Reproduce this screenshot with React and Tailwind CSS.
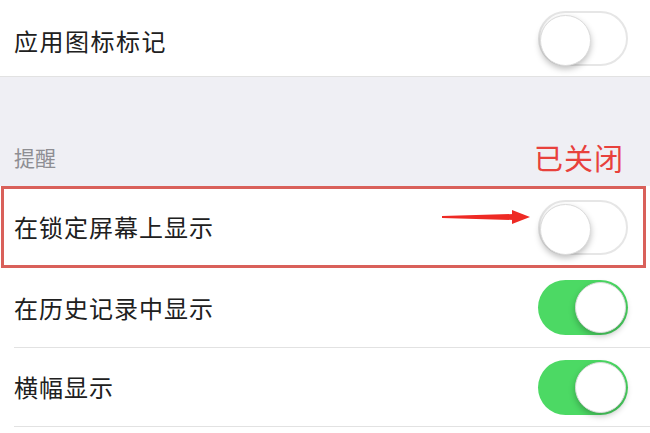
import React from 'react';

const font = { fontFamily: '"Noto Sans CJK SC", "Noto Sans", sans-serif' };

function Toggle({ on }) {
    return (
        <div
            className={`relative w-[90px] h-[55px] rounded-full shrink-0 ${
                on ? 'bg-[#4cd964]' : 'bg-white border-[2px] border-[#e6e6e6]'
            }`}
        >
            <div
                className={`absolute top-[2px] w-[51px] h-[51px] rounded-full bg-white shadow-[0_3px_6px_rgba(0,0,0,0.25)] border border-[#dcdcdc] ${
                    on ? 'right-[2px]' : 'left-0 top-0'
                }`}
            />
        </div>
    );
}

function Arrow() {
    return (
        <svg width="90" height="16" viewBox="0 0 90 16" className="-mt-[20px] mr-[6px]">
            <polygon points="0,7 72,5 72,11 0,9" fill="#ee2a24" />
            <polygon points="70,1 88,8 70,15" fill="#ee2a24" />
        </svg>
    );
}

export default function App() {
    return (
        <div className="w-[650px] h-[433px] bg-white overflow-hidden text-[#202020]" style={font}>
            {/* 应用图标标记 */}
            <div className="h-[77px] flex items-center justify-between pl-[14px] pr-[22px] border-b border-[#e2e2e2] bg-white">
                <span className="text-[24px] tracking-[1.5px] mt-[6px]">应用图标标记</span>
                <Toggle on={false} />
            </div>

            {/* 分组标题 */}
            <div className="h-[109px] bg-[#efeff4] flex flex-col justify-end">
                <div className="h-[48px] flex items-center justify-between pl-[14px] pr-[26px] mb-[4px]">
                    <span className="text-[21px] text-[#8e8e93]">提醒</span>
                    <span className="text-[29px] text-[#e8413c] tracking-[1px]">已关闭</span>
                </div>
            </div>

            {/* 在锁定屏幕上显示 */}
            <div className="h-[82px] ml-[1px] mr-[4px] border-[3px] border-[#d9605a] bg-white flex items-center pl-[10px] pr-[15px]">
                <span className="text-[24px] tracking-[1px]">在锁定屏幕上显示</span>
                <div className="ml-auto flex items-center">
                    <Arrow />
                    <Toggle on={false} />
                </div>
            </div>

            {/* 在历史记录中显示 */}
            <div className="pl-[14px]">
                <div className="h-[80px] flex items-center justify-between pr-[22px] border-b border-[#e2e2e2]">
                    <span className="text-[24px] tracking-[1px]">在历史记录中显示</span>
                    <Toggle on />
                </div>
                <div className="h-[79px] flex items-center justify-between pr-[22px] border-b border-[#e2e2e2]">
                    <span className="text-[24px] tracking-[1px]">横幅显示</span>
                    <Toggle on />
                </div>
            </div>
        </div>
    );
}
